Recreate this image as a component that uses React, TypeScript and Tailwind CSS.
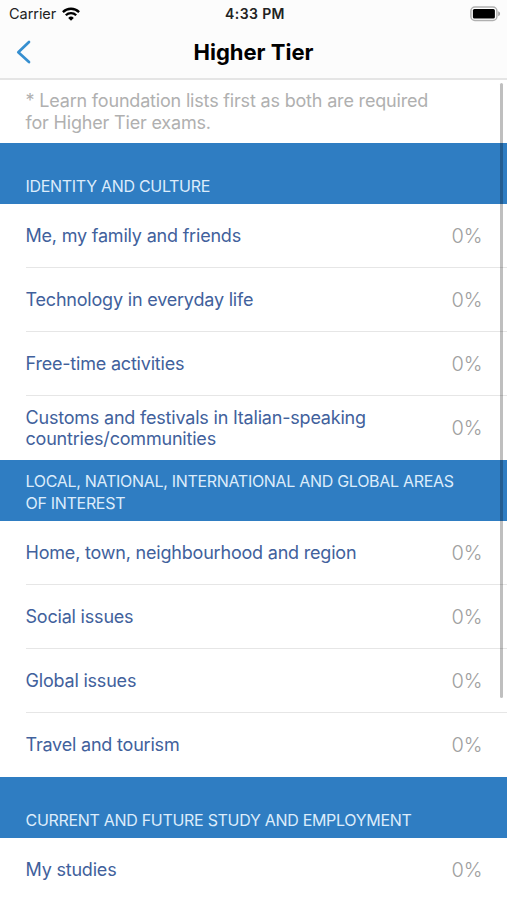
interface Topic {
    name: string;
    progress: number;
}

interface Section {
    title: string;
    topics: Topic[];
}

const sections: Section[] = [
    {
        title: "Identity and culture",
        topics: [
            { name: "Me, my family and friends", progress: 0 },
            { name: "Technology in everyday life", progress: 0 },
            { name: "Free-time activities", progress: 0 },
            { name: "Customs and festivals in Italian-speaking countries/communities", progress: 0 },
        ],
    },
    {
        title: "Local, national, international and global areas of interest",
        topics: [
            { name: "Home, town, neighbourhood and region", progress: 0 },
            { name: "Social issues", progress: 0 },
            { name: "Global issues", progress: 0 },
            { name: "Travel and tourism", progress: 0 },
        ],
    },
    {
        title: "Current and future study and employment",
        topics: [{ name: "My studies", progress: 0 }],
    },
];

function WifiIcon() {
    return (
        <svg width="18" height="14" viewBox="0 0 18 14" fill="none" stroke="#000" strokeWidth="2.3">
            <path d="M0.9 5.1a11.5 11.5 0 0 1 16.2 0" />
            <path d="M3.8 8.3a7.4 7.4 0 0 1 10.4 0" />
            <path d="M9 13.8 6.2 10.9a4 4 0 0 1 5.6 0Z" fill="#000" stroke="none" />
        </svg>
    );
}

function BatteryIcon() {
    return (
        <svg width="32" height="16" viewBox="0 0 32 16">
            <rect x="1.9" y="1" width="26" height="13.4" rx="4" fill="#fff" stroke="#b0b0b0" strokeWidth="1.5" />
            <rect x="3.9" y="3" width="22" height="9.6" rx="1.5" fill="#000" />
            <path d="M29.2 5.2c2.5.8 2.5 4.2 0 5Z" fill="#a0a0a0" />
        </svg>
    );
}

function StatusBar() {
    return (
        <div className="grid h-[27px] grid-cols-3 items-center pr-1.5 pl-[9px]">
            <div className="flex items-center gap-1.5">
                <span className="text-[14.5px] tracking-[-0.05px] text-[#222]">Carrier</span>
                <WifiIcon />
            </div>
            <span className="text-center text-[14px] font-semibold tracking-[0.4px] text-[#222]">4:33 PM</span>
            <div className="flex justify-end">
                <BatteryIcon />
            </div>
        </div>
    );
}

function NavBar() {
    return (
        <div className="grid h-[50px] grid-cols-[60px_1fr_60px] items-center">
            <button type="button" aria-label="Back" className="pl-4">
                <svg width="16" height="24" viewBox="0 0 16 24" fill="none" stroke="#368fd0" strokeWidth="2.7" strokeLinecap="round" strokeLinejoin="round">
                    <path d="M13 2 2.3 12.3 13 22" />
                </svg>
            </button>
            <h1 className="text-center text-[22px] font-bold text-black">Higher Tier</h1>
        </div>
    );
}

function TopicRow({ name, progress }: Topic) {
    return (
        <li className="ml-[25.5px] flex h-16 items-center justify-between border-b border-[#e6e6e6] pt-px pr-[24.5px] last:border-transparent">
            <span className="max-w-[380px] text-[18px] leading-[21.5px] tracking-[-0.2px] text-[#41619c]">{name}</span>
            <span className="text-[20px] font-light text-[#a0a0a0]">{progress}%</span>
        </li>
    );
}

export default function App() {
    return (
        <div className="relative h-[900px] w-full overflow-hidden bg-white font-['Inter',sans-serif]">
            <header className="h-20 border-b-2 border-[#e5e5e5] bg-[#fcfcfc]">
                <StatusBar />
                <NavBar />
            </header>
            <p className="h-[63px] pt-2.5 pl-[25.5px] text-[18px] leading-[21.5px] tracking-[-0.18px] text-[#b0b0b0]">
                * Learn foundation lists first as both are required
                <br />
                for Higher Tier exams.
            </p>
            {sections.map((section) => (
                <section key={section.title}>
                    <h2 className="flex h-[61px] items-end bg-[#2f7dc2] pr-10 pb-[7px] pl-[25.5px] text-[16px] leading-[22px] tracking-[-0.3px] text-[#dcecfb] uppercase">
                        {section.title}
                    </h2>
                    <ul>
                        {section.topics.map((topic) => (
                            <TopicRow key={topic.name} {...topic} />
                        ))}
                    </ul>
                </section>
            ))}
            {/* scroll indicator */}
            <div className="absolute top-[83px] right-1 h-[615px] w-[3px] rounded-full bg-black/25" />
        </div>
    );
}
